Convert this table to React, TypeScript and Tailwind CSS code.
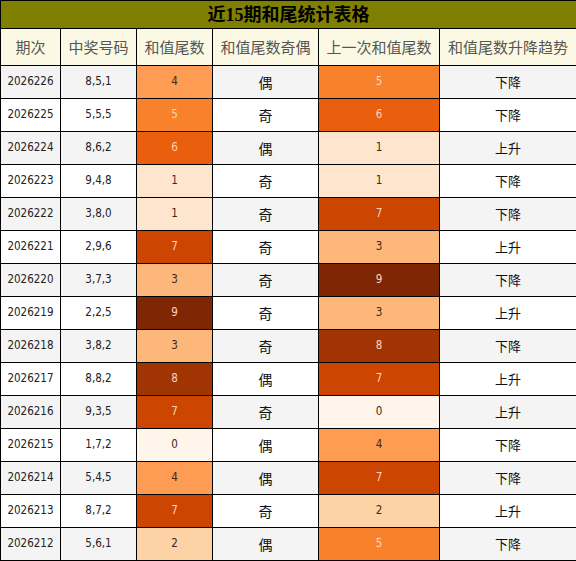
import React from 'react';

type Row = {
  issue: string;
  nums: string;
  tail: number;
  parity: string;
  prev: number;
  trend: string;
};

const rows: Row[] = [
  { issue: '2026226', nums: '8,5,1', tail: 4, parity: '偶', prev: 5, trend: '下降' },
  { issue: '2026225', nums: '5,5,5', tail: 5, parity: '奇', prev: 6, trend: '下降' },
  { issue: '2026224', nums: '8,6,2', tail: 6, parity: '偶', prev: 1, trend: '上升' },
  { issue: '2026223', nums: '9,4,8', tail: 1, parity: '奇', prev: 1, trend: '下降' },
  { issue: '2026222', nums: '3,8,0', tail: 1, parity: '奇', prev: 7, trend: '下降' },
  { issue: '2026221', nums: '2,9,6', tail: 7, parity: '奇', prev: 3, trend: '上升' },
  { issue: '2026220', nums: '3,7,3', tail: 3, parity: '奇', prev: 9, trend: '下降' },
  { issue: '2026219', nums: '2,2,5', tail: 9, parity: '奇', prev: 3, trend: '上升' },
  { issue: '2026218', nums: '3,8,2', tail: 3, parity: '奇', prev: 8, trend: '下降' },
  { issue: '2026217', nums: '8,8,2', tail: 8, parity: '偶', prev: 7, trend: '上升' },
  { issue: '2026216', nums: '9,3,5', tail: 7, parity: '奇', prev: 0, trend: '上升' },
  { issue: '2026215', nums: '1,7,2', tail: 0, parity: '偶', prev: 4, trend: '下降' },
  { issue: '2026214', nums: '5,4,5', tail: 4, parity: '偶', prev: 7, trend: '下降' },
  { issue: '2026213', nums: '8,7,2', tail: 7, parity: '奇', prev: 2, trend: '上升' },
  { issue: '2026212', nums: '5,6,1', tail: 2, parity: '偶', prev: 5, trend: '下降' },
];

// heat colours for digits 0-9
const heat = [
  '#fff5eb', '#fee6ce', '#fdd3a6', '#fdb77a', '#fd9c52',
  '#f8822c', '#e95f0e', '#cc4501', '#a13403', '#7f2704',
];

function HeatCell({ v }: { v: number }) {
  return (
    <td
      className={`border border-black text-center text-[11.5px] font-['DejaVu_Sans_Condensed','DejaVu_Sans',sans-serif] ${v >= 5 ? 'text-[#fbd5b8]' : 'text-[#3a2a20]'}`}
      style={{ backgroundColor: heat[v] }}
    >
      {v}
    </td>
  );
}

export default function App() {
  const headers = ['期次', '中奖号码', '和值尾数', '和值尾数奇偶', '上一次和值尾数', '和值尾数升降趋势'];
  return (
    <div className="w-[576px] h-[561px] bg-white">
      <table className="w-[576px] table-fixed border-collapse border border-black">
        <colgroup>
          <col className="w-[60px]" />
          <col className="w-[76px]" />
          <col className="w-[76px]" />
          <col className="w-[106px]" />
          <col className="w-[121px]" />
          <col className="w-[137px]" />
        </colgroup>
        <thead>
          <tr className="h-[28px]">
            <th
              colSpan={6}
              className="border border-black bg-[#808000] text-black text-[18px] font-bold leading-none font-['Liberation_Serif','Noto_Sans_CJK_SC',serif]"
            >
              近15期和尾统计表格
            </th>
          </tr>
          <tr className="h-[37px] bg-[#fbf9e3]">
            {headers.map((h) => (
              <th
                key={h}
                className="border border-black font-normal text-[15px] text-[#555] whitespace-nowrap font-['Noto_Sans_CJK_SC',sans-serif]"
              >
                {h}
              </th>
            ))}
          </tr>
        </thead>
        <tbody>
          {rows.map((r, i) => {
            const bg = i % 2 === 0 ? 'bg-[#f4f4f4]' : 'bg-white';
            return (
              <tr key={r.issue} className={`h-[33px] ${bg}`}>
                <td className="border border-black text-center text-[11.5px] text-[#222] font-['DejaVu_Sans_Condensed','DejaVu_Sans',sans-serif]">
                  {r.issue}
                </td>
                <td className="border border-black text-center text-[11.5px] text-[#222] font-['DejaVu_Sans_Condensed','DejaVu_Sans',sans-serif]">
                  {r.nums}
                </td>
                <HeatCell v={r.tail} />
                <td className="border border-black text-center text-[14px] text-[#111] font-['Noto_Sans_CJK_SC',sans-serif]">
                  {r.parity}
                </td>
                <HeatCell v={r.prev} />
                <td className="border border-black text-center text-[13px] text-[#111] font-['Noto_Sans_CJK_SC',sans-serif]">
                  {r.trend}
                </td>
              </tr>
            );
          })}
        </tbody>
      </table>
    </div>
  );
}
